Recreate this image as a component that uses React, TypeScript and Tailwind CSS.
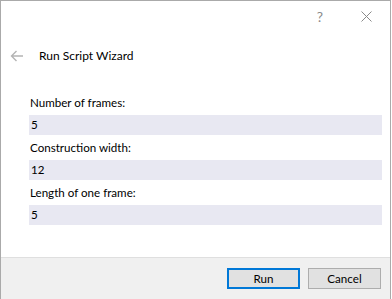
export default function App() {
  const fields = [
    { label: "Number of frames:", value: "5" },
    { label: "Construction width:", value: "12" },
    { label: "Length of one frame:", value: "5" },
  ];

  return (
    <div
      className="w-[391px] h-[299px] flex flex-col bg-white border-l border-t border-r border-[#aaaaaa] text-[11.6px] text-black"
      style={{ fontFamily: 'Lato, "Noto Sans", sans-serif' }}
    >
      {/* title bar */}
      <div className="h-[31px] flex items-center justify-end">
        <span className="w-[46px] text-center text-[14px] text-[#8a8a8a] leading-none">?</span>
        <span className="w-[46px] flex justify-center mr-[1px]">
          <svg width="11" height="11" viewBox="0 0 11 11">
            <path d="M0.5 0.5 L10.5 10.5 M10.5 0.5 L0.5 10.5" stroke="#8a8a8a" strokeWidth="1" fill="none" />
          </svg>
        </span>
      </div>

      {/* header */}
      <div className="h-[48px] flex items-center">
        <svg className="ml-[9px]" width="14" height="12" viewBox="0 0 14 12">
          <path d="M13 6 H1.5 M6.5 1 L1.5 6 L6.5 11" stroke="#b4b4b4" strokeWidth="1.4" fill="none" />
        </svg>
        <span className="ml-[15px] text-[12px]">Run Script Wizard</span>
      </div>

      {/* fields */}
      <div className="pt-[10px] pl-[28px] pr-[8px] flex flex-col">
        {fields.map((f) => (
          <div key={f.label} className="flex flex-col">
            <div className="h-[25px] flex items-end pb-[4px] pl-[1px] leading-[16px]">{f.label}</div>
            <div className="h-[20px] bg-[#e8e8f2] flex items-center pl-[2px] leading-none">{f.value}</div>
          </div>
        ))}
      </div>

      {/* footer */}
      <div className="mt-auto h-[42px] border-t border-[#dfdfdf] bg-[#f0f0f0] flex items-center justify-end gap-[8px] pr-[9px]">
        <button className="w-[73px] h-[21px] border-2 border-[#0078d7] bg-[#e1e1e1] leading-none">Run</button>
        <button className="w-[73px] h-[21px] border border-[#adadad] bg-[#e1e1e1] leading-none">Cancel</button>
      </div>
    </div>
  );
}
